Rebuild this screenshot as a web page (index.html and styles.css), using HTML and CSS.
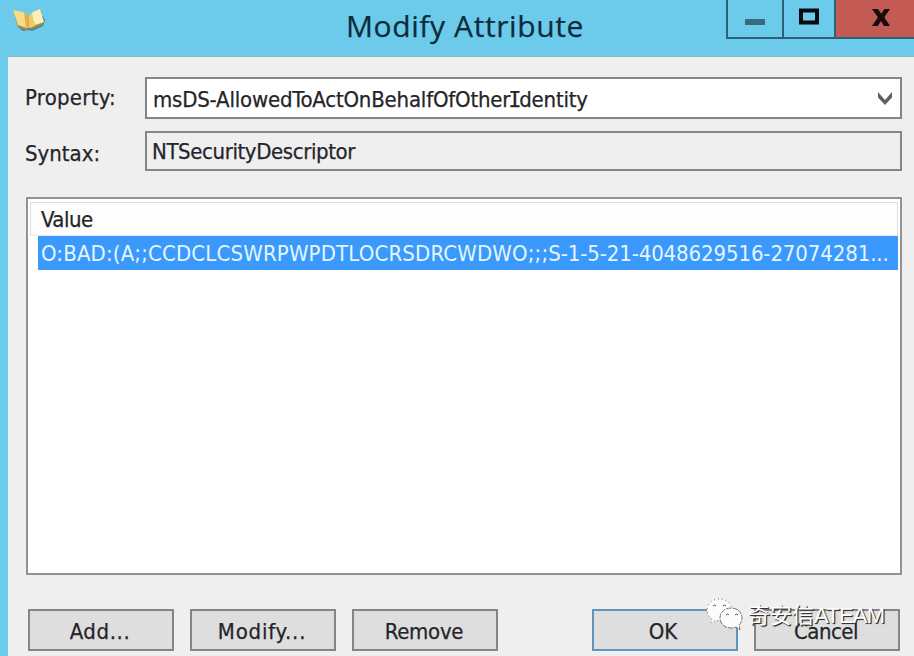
FILE: index.html
```html
<!DOCTYPE html>
<html lang="en">
<head>
<meta charset="utf-8">
<title>Modify Attribute</title>
<link rel="stylesheet" href="styles.css">
</head>
<body>
<div class="window">
  <header class="titlebar">
    <svg class="book" width="34" height="25" viewBox="0 0 34 25">
      <path d="M6 19l5 4 6-1 3 1 11-5 2-6-2-4z" fill="#356b78" opacity=".7"/>
      <path d="M1 2l5 17 8 3 3-2 3 1 11-5-2-14-10 6z" fill="#b98a35"/>
      <path d="M1 2l10 2 6 4 2 11-4 1-9-3z" fill="#f7dc8a"/>
      <path d="M17 8l4-4 7-3 4 13-9 3-5 3z" fill="#fcf0b8"/>
      <path d="M12 5l5 3 1 12-4-1z" fill="#e0b04c"/>
      <path d="M17 8l3-3 3 12-5 3z" fill="#eecb6a"/>
    </svg>
    <h1 class="title">Modify Attribute</h1>
    <div class="controls">
      <div class="control minimize"><svg width="20" height="6"><path d="M0 0h20v6H0z" fill="#356d7f"/></svg></div>
      <div class="control maximize"><svg width="20" height="17"><path d="M2 2.500h16v12H2z" fill="none" stroke="#050b0e" stroke-width="4"/></svg></div>
      <div class="control close"><svg width="20" height="17" viewBox="0 0 20 17"><path d="M1 0h6l3.200 4.700L13.500 0H19l-5.700 8.300L19 17h-6l-3-5-3.200 5H1l5.900-8.700z" fill="#160d0c"/></svg></div>
    </div>
  </header>
  <main class="dialog">
    <div class="field">
      <label class="label property-label">Property:</label>
      <div class="box combo"><span class="property-text">msDS-AllowedToActOnBehalfOfOther<span class="serif-i">I</span>dentity</span>
        <svg class="chevron" width="16" height="14"><path d="M1 0l7 8 7-8v5.500l-7 7.500-7-7.500z" fill="#606060"/></svg>
      </div>
    </div>
    <div class="field syntax">
      <label class="label">Syntax:</label>
      <div class="box readonly"><span class="syntax-text">NTSecurityDescriptor</span></div>
    </div>
    <div class="list">
      <div class="list-head">Value</div>
      <div class="list-row"><span class="sddl">O:BAD:(A;;CCDCLCSWRPWPDTLOCRSDRCWDWO;;;</span><span class="sid">S-1-5-21-4048629516-27074281...</span></div>
    </div>
    <footer class="actions">
      <button class="button add">Add...</button>
      <button class="button modify">Modify...</button>
      <button class="button remove">Remove</button>
      <button class="button primary">OK</button>
      <button class="button cancel">Cancel</button>
    </footer>
  </main>
  <div class="watermark">
    <svg class="bubbles" width="38" height="34" viewBox="0 0 38 34">
      <g stroke="#555" stroke-width=".8">
        <path d="M13 1C6 1 1 6 1 12c0 4 2 7 5 9l-1 4 5-3c9 3 16-3 16-10S20 1 13 1z" fill="#fcfcfc" stroke-dasharray="1 3"/>
        <path d="M25 10c-6 0-11 4-11 10s5 10 11 10c2 0 3 0 5-1l4 3-1-5c2-2 3-4 3-7 0-6-5-10-11-10z" fill="#fcfcfc" stroke-dasharray="5 1"/>
      </g>
      <path d="M7 8q2-2 3 0m7 0q2-2 3 0M20 17q2-2 3 0m6 0q2-2 3 0" fill="none" stroke="#555"/>
    </svg>
    <span class="brand">奇安信<span class="team">ATEAM</span></span>
  </div>
</div>
</body>
</html>
```
FILE: styles.css
```css
* { box-sizing: border-box; }
body { margin: 0; width: 914px; height: 656px; overflow: hidden; }
.window {
  position: relative;
  display: flex;
  flex-direction: column;
  height: 656px;
  padding-left: 8px;
  background: #6ccbea;
  color: #252529;
  font: 22px/26px "DejaVu Sans Condensed", "DejaVu Sans", sans-serif;
  font-stretch: condensed;
  -webkit-text-stroke: .25px;
}
.titlebar { display: flex; align-items: flex-start; flex: 0 0 57px; border-bottom: 1px solid #8db8c5; }
.book { margin: 8px 0 0 4px; }
.title {
  flex: 1;
  margin: 6px 0 0 300px;
  color: #0c2c3b;
  font: 400 30px/40px "Open Sans", sans-serif;
  letter-spacing: .6px;
  white-space: nowrap;
}
.controls { display: flex; width: 188px; height: 39px; border: solid #2c6277; border-width: 0 0 2px 2px; }
.control { display: flex; justify-content: center; height: 37px; padding-top: 9px; }
.minimize { width: 54px; padding-top: 19px; }
.maximize { width: 54px; border: solid #2c6277; border-width: 0 2px 0 2px; padding-top: 8px; }
.close { flex: 1; padding-left: 12px; background: #c35a53; }
.dialog { flex: 1; display: flex; flex-direction: column; padding: 20px 12px 0 17px; background: #efefef; border-left: 1px solid #e1f2f7; }
.field { display: flex; height: 42px; }
.label { width: 120px; margin-left: -1px; padding-top: 8px; }
.property-label { letter-spacing: .25px; }
.box { flex: 1; display: flex; justify-content: space-between; padding: 8px 7px 0 6px; border: 2px solid #858585; white-space: nowrap; }
.combo { background: #fff; }
.property-text { letter-spacing: -.2px; }
.chevron { margin-top: 5px; }
.serif-i { display: inline-block; width: 9px; text-indent: -2px; font-family: "DejaVu Sans Mono", monospace; }
.syntax { height: 40px; margin-top: 12px; }
.syntax .label { padding-top: 10px; }
.syntax .box { padding-top: 6px; padding-left: 5px; }
.syntax-text { letter-spacing: -.4px; }
.list { height: 378px; margin-top: 26px; padding: 3px 2px 0; border: 2px solid #929292; background: #fff; }
.list-head { height: 34px; padding: 4px 0 0 10px; border: 1px solid #dededf; border-bottom-color: #e5e5e5; background: #fdfdfd; letter-spacing: -.5px; }
.list-row { height: 34px; margin-left: 8px; padding: 5px 0 0 3px; background: #3c99fc; color: #e2f6ff; white-space: nowrap; overflow: hidden; -webkit-text-stroke: 0; }
.sddl { letter-spacing: .15px; }
.sid { letter-spacing: -.12px; }
.actions { display: flex; gap: 16px; margin: 34px 0 0 2px; }
.button { width: 146px; height: 42px; padding: 3px 2px 0 0; border: 2px solid #858585; border-radius: 0; background: #dedede; color: inherit; font: inherit; }
.add { letter-spacing: .6px; }
.modify { letter-spacing: .8px; }
.remove { letter-spacing: -.3px; }
.primary { margin-left: 78px; padding-right: 4px; border-color: #6295ba; }
.cancel { letter-spacing: -.5px; }
.watermark { position: absolute; left: 706px; top: 598px; display: flex; -webkit-text-stroke: 0; }
.brand { margin: 4px 0 0 4px; color: #fff; font: 22px/28px "Liberation Sans", "Noto Sans CJK SC", sans-serif; text-shadow: 1px 1px 1px #333, 1px 1px 0 #444; white-space: nowrap; }
.team { letter-spacing: -.8px; }
```
